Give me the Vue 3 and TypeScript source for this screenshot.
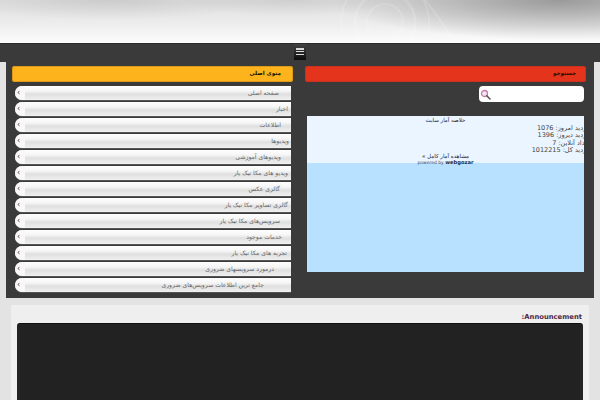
<script setup lang="ts">
interface MenuItem { label: string; indent: number }
const menu: MenuItem[] = [
  { label: 'صفحه اصلی', indent: 12 },
  { label: 'اخبار', indent: 3 },
  { label: 'اطلاعات', indent: 10 },
  { label: 'ویدیوها', indent: 2 },
  { label: 'ویدیوهای آموزشی', indent: 10 },
  { label: 'ویدیو های مکا نیک یار', indent: 3 },
  { label: 'گالری عکس', indent: 11 },
  { label: 'گالری تصاویر مکا نیک یار', indent: 3 },
  { label: 'سرویس‌های مکا نیک یار', indent: 11 },
  { label: 'خدمات موجود', indent: 9 },
  { label: 'تجربه های مکا نیک یار', indent: 4 },
  { label: 'درمورد سرویسهای ضروری', indent: 17 },
  { label: 'جامع ترین اطلاعات سرویس‌های ضروری', indent: 27 },
]
const stats: string[] = ['بازدید امروز: 1076', 'بازدید دیروز: 1396', 'تعداد آنلاین: 7', 'بازدید کل: 1012215']
</script>

<template>
  <div class="page">
    <header class="banner">
      <svg class="swirl" width="600" height="43" viewBox="0 0 600 43" fill="none">
        <g stroke="#ffffff" stroke-opacity="0.14">
          <circle cx="385" cy="22" r="18" stroke-width="2" />
          <circle cx="385" cy="22" r="30" stroke-width="3" />
          <circle cx="385" cy="22" r="44" stroke-width="2" />
          <path d="M425 0c10 12 22 30 30 43" stroke-width="2" />
        </g>
      </svg>
    </header>
    <nav class="strip">
      <button class="menu-btn" aria-label="menu"><i></i><i></i><i></i></button>
    </nav>
    <main class="panel">
      <section class="col">
        <h2 class="bar yellow">منوی اصلی</h2>
        <ul class="menu">
          <li v-for="item in menu" :key="item.label" class="item">
            <span class="chev">‹</span>
            <span class="label" :style="{ paddingRight: item.indent + 'px' }">{{ item.label }}</span>
          </li>
        </ul>
      </section>
      <section class="col">
        <h2 class="bar red">جستوجو</h2>
        <div class="search-row">
          <div class="search">
            <svg width="11" height="11" viewBox="0 0 11 11">
              <circle cx="4.5" cy="4.5" r="3" fill="#f6e4f0" stroke="#c77aa8" stroke-width="1.3" />
              <path d="M6.8 6.8 10 10" stroke="#555" stroke-width="1.6" stroke-linecap="round" />
            </svg>
          </div>
        </div>
        <div class="widget">
          <div class="widget-top">
            <div class="w-title">خلاصه آمار سایت</div>
            <div class="w-stats">
              <div v-for="s in stats" :key="s">{{ s }}</div>
            </div>
            <div class="w-more">مشاهده آمار کامل »</div>
            <div class="w-power">powered by <b>webgozar</b></div>
          </div>
        </div>
      </section>
    </main>
    <section class="announce">
      <h3 class="ann-title">:Announcement</h3>
      <div class="ann-box"></div>
    </section>
  </div>
</template>

<style>
html, body { margin: 0; padding: 0; overflow: hidden; }
</style>

<style scoped>
.page {
  width: 600px;
  height: 400px;
  overflow: hidden;
  background: #e3e3e3;
  font-family: "DejaVu Sans", sans-serif;
}
.banner {
  height: 43px;
  overflow: hidden;
  background:
    radial-gradient(ellipse 230px 40px at 560px 0, rgba(125,125,125,0.7), rgba(125,125,125,0) 100%),
    radial-gradient(ellipse 150px 20px at 110px 0, rgba(175,175,175,0.4), rgba(175,175,175,0) 100%),
    radial-gradient(ellipse 110px 16px at 290px 0, rgba(170,170,170,0.3), rgba(170,170,170,0) 100%),
    linear-gradient(180deg, #dedede 0%, #ededed 55%, #fcfcfc 100%);
}
.swirl { display: block; }
.strip {
  height: 19px;
  background: #3a3a3a;
  border-top: 1px solid #2c2c2c;
  box-sizing: border-box;
  display: flex;
  justify-content: center;
}
.menu-btn {
  width: 12px;
  height: 16px;
  margin: 0;
  padding: 4px 2px 5px;
  border: 0;
  background: linear-gradient(180deg, #444, #0c0c0c);
  display: flex;
  flex-direction: column;
  justify-content: space-between;
  box-sizing: border-box;
}
.menu-btn i {
  display: block;
  height: 1.5px;
  background: #d8d8d8;
}
.panel {
  margin: 0 6px;
  height: 236px;
  padding: 4px 8px 0 6px;
  box-sizing: border-box;
  background: #3a3a3a;
  display: grid;
  grid-template-columns: 281px 281px;
  column-gap: 12px;
}
.col { min-width: 0; }
.bar {
  margin: 0;
  height: 16px;
  line-height: 15px;
  font-size: 5.6px;
  font-weight: bold;
  color: #1a1200;
  direction: rtl;
  text-align: right;
  padding-right: 12px;
  border-radius: 3px;
  box-sizing: border-box;
}
.bar.yellow { background: #fdb31b; box-shadow: inset 0 0 0 1px #dc9a18; }
.bar.red { background: #e5341c; padding-right: 10px; box-shadow: inset 0 0 0 1px #c9321f; }
.menu {
  list-style: none;
  margin: 4px 2px 0 3px;
  padding: 0;
}
.item {
  height: 14px;
  margin-bottom: 2px;
  border-radius: 7px 0 0 7px;
  background: linear-gradient(180deg, #fefefe 0%, #f6f6f6 35%, #e0e0e0 58%, #e3e3e3 68%, #f0f0f0 100%);
  display: flex;
  align-items: center;
  justify-content: space-between;
  font-size: 6.1px;
  line-height: 12px;
  color: #666;
  box-shadow: 0 1px 0 #555;
}
.chev {
  width: 10px;
  height: 14px;
  padding-left: 2px;
  box-sizing: border-box;
  border-radius: 7px 0 0 7px;
  background: #f8f8f8;
  font-size: 8px;
  line-height: 13px;
  color: #444;
}
.label { direction: rtl; padding-left: 4px; padding-bottom: 1px; white-space: nowrap; }
.search-row {
  display: flex;
  justify-content: flex-end;
  margin-top: 4px;
  padding-right: 2px;
}
.search {
  width: 105px;
  height: 16px;
  background: #fff;
  border-radius: 4px;
  display: flex;
  align-items: center;
  padding-left: 1px;
  box-sizing: border-box;
}
.widget {
  margin: 14px 2px 0;
  height: 156px;
  background: #b8e0ff;
  overflow: hidden;
}
.widget-top {
  height: 47px;
  background: #eaf5ff;
  font-size: 6px;
  color: #333;
  display: flex;
  flex-direction: column;
  box-sizing: border-box;
  padding-top: 1px;
}
.w-title, .w-more { direction: rtl; text-align: center; line-height: 7px; color: #223; }
.w-title { margin-bottom: 1px; font-size: 5.5px; }
.w-stats {
  direction: rtl;
  margin-right: -6px;
  font-size: 6.5px;
  line-height: 7.3px;
  color: #444;
  height: 29px;
  white-space: nowrap;
}
.w-more { font-size: 5.5px; margin-top: -1px; }
.w-power { text-align: center; font-size: 4.5px; line-height: 5px; color: #445; }
.w-power b { font-size: 5.2px; color: #1c2a44; }
.announce {
  margin: 7px 11px 0;
  padding: 6px 6px 0;
  background: #efefef;
  height: 120px;
  box-sizing: border-box;
}
.ann-title {
  margin: 0;
  height: 12px;
  line-height: 12px;
  font-size: 6.8px;
  font-weight: bold;
  color: #4f2a45;
  text-align: right;
  padding-right: 1px;
}
.ann-box {
  height: 100px;
  background: #222;
  border-radius: 3px 3px 0 0;
  border-top: 1px solid #111;
}
</style>
